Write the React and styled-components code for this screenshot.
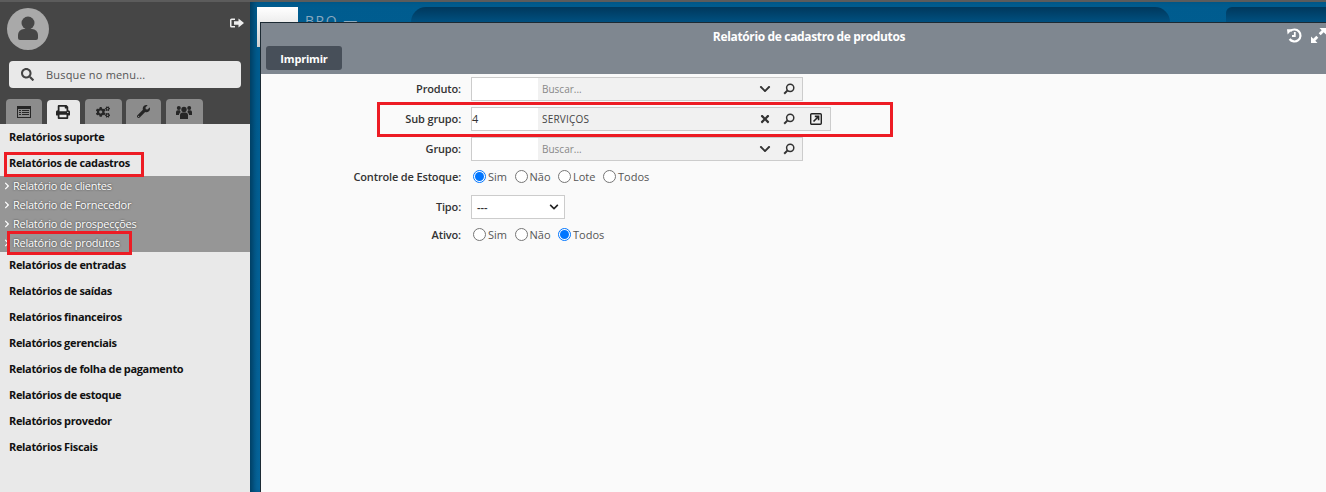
import React from 'react'
import styled, { createGlobalStyle } from 'styled-components'
import { FaSearch, FaPrint, FaCogs, FaWrench, FaChevronDown, FaTimes, FaChevronRight } from 'react-icons/fa'

const Global = createGlobalStyle`
html, body { margin: 0; height: 100%; overflow: hidden; }
#root { height: 100%; }
body { font-family: "Open Sans", "Noto Sans", sans-serif; color: #333; }
`
const Page = styled.div`
display: flex;
height: 492px;
width: 1326px;
position: relative;
overflow: hidden;
`
const Sidebar = styled.aside`
width: 250px;
flex: none;
display: flex;
flex-direction: column;
background: #e9e9e9;
`
const Top = styled.div`
height: 116px;
background: #464646;
border-top: 2px solid #5c5c5c;
display: flex;
flex-direction: column;
padding: 6px 6px 0 7px;
`
const UserRow = styled.div`
display: flex;
justify-content: space-between;
align-items: flex-start;
`
const Avatar = styled.svg`
width: 42px;
height: 42px;
`
const Logout = styled.svg`
width: 14px;
height: 14px;
margin-top: 8px;
`
const SearchBox = styled.div`
margin: 11px 3px 0 2px;
height: 27px;
border-radius: 4px;
background: #e9e9e9;
display: flex;
align-items: center;
padding-left: 12px;
gap: 12px;
color: #555;
font-size: 11px;
letter-spacing: 0.18px;
svg { color: #444; font-size: 13px; }
`
const Tabs = styled.div`
display: flex;
align-items: flex-start;
gap: 4.5px;
margin: 11px 0 0 -1px;
height: 25px;
`
const Tab = styled.div`
width: ${p => p.$w}px;
height: ${p => (p.$active ? 24 : 25)}px;
margin-top: ${p => (p.$active ? 1 : 0)}px;
border-radius: 4px 4px 0 0;
background: ${p => (p.$active ? '#e9e9e9' : '#8c8c8c')};
color: #262626;
display: flex;
align-items: center;
justify-content: center;
font-size: ${p => p.$icon || 14}px;
`
const Menu = styled.nav`
display: flex;
flex-direction: column;
`
const MenuItem = styled.div`
height: 26px;
line-height: 26px;
padding-left: 9px;
font-size: 11px;
font-weight: 700;
letter-spacing: -0.34px;
color: #111;
`
const SubMenu = styled.div`
background: #969696;
height: 76px;
display: flex;
flex-direction: column;
`
const SubItem = styled.div`
height: 19px;
display: flex;
align-items: center;
font-size: 11px;
font-weight: 500;
letter-spacing: -0.25px;
color: #fff;
text-shadow: 0 0 2px #333;
padding-left: 3px;
gap: 2px;
svg { font-size: 8px; flex: none; }
`
const Main = styled.main`
flex: 1;
position: relative;
background: linear-gradient(#005c8f, #06659c);
box-shadow: inset 6px 0 6px -3px #003a5c;
border-top: 2px solid #5c5c5c;
display: flex;
align-items: flex-start;
padding: 5px 0 0 7px;
`
const Logo = styled.div`
width: 41px;
height: 40px;
background: linear-gradient(#fff, #d0d0d0);
flex: none;
`
const Brand = styled.div`
margin: 4px 0 0 7px;
font-size: 14px;
letter-spacing: 1.5px;
color: #8aa9bf;
width: 106px;
flex: none;
`
const Pill = styled.div`
height: 15px;
flex: none;
width: ${p => p.$w}px;
margin-left: ${p => p.$ml}px;
background: linear-gradient(#00385c, #005080);
border-radius: ${p => p.$r};
`
const Win = styled.section`
position: absolute;
left: 10px;
top: 20px;
right: 0;
bottom: 0;
background: #fafafa;
border-top: 1px solid #1c2a33;
border-left: 1px solid #1c2a33;
display: flex;
flex-direction: column;
`
const WinHead = styled.header`
height: 51px;
flex: none;
background: #7f8790;
display: flex;
flex-direction: column;
`
const TitleRow = styled.div`
height: 23px;
display: flex;
align-items: flex-start;
`
const WinTitle = styled.h1`
flex: 1;
margin: 0;
padding-left: 70px;
text-align: center;
font-size: 12px;
font-weight: 700;
letter-spacing: -0.35px;
color: #fff;
line-height: 28px;
`
const WinTools = styled.div`
display: flex;
gap: 9px;
margin-top: 5px;
`
const PrintBtn = styled.button`
margin-left: 5px;
width: 76px;
height: 24px;
border: none;
border-radius: 3px;
background: #474f59;
color: #fff;
font: 700 11px "Open Sans", sans-serif;
letter-spacing: -0.2px;
`
const Form = styled.form`
display: flex;
flex-direction: column;
padding-top: 3px;
`
const Row = styled.div`
display: grid;
grid-template-columns: 200px 1fr;
column-gap: 10px;
align-items: center;
height: ${p => p.$h || 24}px;
margin-bottom: ${p => p.$mb ?? 6}px;
`
const Label = styled.label`
text-align: right;
font-size: 11px;
font-weight: 600;
letter-spacing: -0.15px;
color: #333;
padding-bottom: 2px;
`
const Lookup = styled.div`
display: flex;
width: ${p => p.$w}px;
height: 24px;
box-sizing: border-box;
border: 1px solid #ccc;
background: #f1f1f1;
align-items: center;
`
const Code = styled.div`
width: 66px;
height: 100%;
flex: none;
background: #fff;
font-size: 11px;
line-height: 22px;
color: #333;
`
const Desc = styled.div`
flex: 1;
padding-left: 4px;
font-size: 10px;
letter-spacing: ${p => (p.$filled ? 0.2 : 0)}px;
color: ${p => (p.$filled ? '#444' : '#888')};
`
const Action = styled.span`
width: 24px;
margin-right: ${p => p.$mr || 0}px;
margin-left: ${p => p.$ml || 0}px;
display: flex;
justify-content: center;
align-items: center;
color: #333;
font-size: 12px;
`
const Radios = styled.div`
display: flex;
align-items: center;
gap: 7.5px;
margin-left: 2px;
font-size: 11px;
color: #555;
`
const RadioItem = styled.span`
display: flex;
align-items: center;
gap: 2px;
line-height: 14px;
padding-bottom: 1px;
`
const Dot = styled.span`
width: 13px;
height: 13px;
box-sizing: border-box;
border-radius: 50%;
border: 1px solid ${p => (p.$on ? '#0075ff' : '#767676')};
background: #fff;
display: flex;
align-items: center;
justify-content: center;
&::after {
  content: "";
  width: 9px;
  height: 9px;
  border-radius: 50%;
  background: ${p => (p.$on ? '#0075ff' : 'transparent')};
}
`
const SelectBox = styled.div`
width: 94px;
height: 24px;
box-sizing: border-box;
border: 1px solid #ccc;
background: #fff;
display: flex;
align-items: center;
justify-content: space-between;
padding: 0 5px;
font-size: 11px;
font-weight: 600;
svg { font-size: 10px; color: #222; }
`
const Mark = styled.div`
position: absolute;
left: ${p => p.$x}px;
top: ${p => p.$y}px;
width: ${p => p.$w}px;
height: ${p => p.$h}px;
box-sizing: border-box;
border: 3px solid #ed1c24;
pointer-events: none;
`

const Lens = () => (
  <svg width="12" height="12" viewBox="0 0 12 12" fill="none" stroke="#333" strokeWidth="1.5">
    <circle cx="7.2" cy="4.8" r="3.6" />
    <path d="M4.600 7.400L1.200 10.800" strokeWidth="2" />
  </svg>
)
const OpenIcon = () => (
  <svg width="12" height="12" viewBox="0 0 12 12" fill="none" stroke="#222">
    <rect x="0.7" y="0.7" width="10.6" height="10.6" rx="1" strokeWidth="1.4" />
    <path d="M3.500 8.500L8 4M4.800 3.400H8.600V7.200" strokeWidth="1.6" />
  </svg>
)
const ListIcon = () => (
  <svg width="14" height="12" viewBox="0 0 14 12" fill="#262626">
    <path fillRule="evenodd" d="M0 0h14v12H0zM1 3v8h12V3z" />
    <path d="M2 4h2v1H2zM5 4h7v1H5zM2 6h2v1H2zM5 6h7v1H5zM2 8h2v1H2zM5 8h7v1H5z" />
  </svg>
)
const UsersIcon = () => (
  <svg width="16" height="14" viewBox="0 0 16 14" fill="#262626">
    <circle cx="8" cy="4.500" r="2.700" />
    <circle cx="2.800" cy="3" r="2" />
    <circle cx="13.200" cy="3" r="2" />
    <path d="M4 9.500A2.500 2.500 0 0 1 6 7.500h4a2.500 2.500 0 0 1 2 2V14H4z" />
    <path d="M0 7a1.800 1.800 0 0 1 1.800-1.800h2.100c.2 1 .6 1.500 1 1.900A3.500 3.500 0 0 0 3 9.500V10H0z" />
    <path d="M16 7a1.800 1.800 0 0 0-1.800-1.800h-2.100c-.2 1-.6 1.500-1 1.900a3.500 3.500 0 0 1 1.900 2.400V10H16z" />
  </svg>
)
const HistoryIcon = () => (
  <svg width="15" height="15" viewBox="0 0 15 15" fill="none" stroke="#fff" strokeWidth="2.2">
    <path d="M3.200 3.300A6 6 0 1 1 2.600 11" />
    <path d="M0 1.200L5.400 1.200 0.600 6.500z" fill="#fff" stroke="none" />
    <path d="M7.800 4v4H5" strokeWidth="1.800" />
  </svg>
)
const ExpandIcon = () => (
  <svg width="15" height="15" viewBox="0 0 15 15" fill="#fff">
    <path d="M8.500 0H15v6.500l-2.300-2.300-3 3-2-2 3-3z" />
    <path d="M6.500 15H0V8.500l2.300 2.300 3-3 2 2-3 3z" />
  </svg>
)

const cad = ['Relatório de clientes', 'Relatório de Fornecedor', 'Relatório de prospecções', 'Relatório de produtos']
const rest = ['Relatórios de entradas', 'Relatórios de saídas', 'Relatórios financeiros', 'Relatórios gerenciais', 'Relatórios de folha de pagamento', 'Relatórios de estoque', 'Relatórios provedor', 'Relatórios Fiscais']

const RadioSet = ({ options, on }) => (
  <Radios>
    {options.map(o => (
      <RadioItem key={o}><Dot $on={o === on} />{o}</RadioItem>
    ))}
  </Radios>
)

const App = () => {
  return (
    <Page>
      <Global />
      <Sidebar>
        <Top>
          <UserRow>
            <Avatar viewBox="0 0 42 42">
              <circle cx="21" cy="21" r="21" fill="#a9a9a9" />
              <circle cx="21" cy="15" r="6.500" fill="#464646" />
              <path d="M11 27a6 6 0 0 1 6-6h8a6 6 0 0 1 6 6v3a2 2 0 0 1-2 2H13a2 2 0 0 1-2-2z" fill="#464646" />
            </Avatar>
            <Logout viewBox="0 0 14 14" fill="#eee">
              <path d="M0 4A1.500 1.500 0 0 1 1.500 2.500H5v1.400H1.500v6.200H5v1.400H1.500A1.500 1.500 0 0 1 0 10z" />
              <path d="M4 5.300h4.500V2.500L14 7l-5.500 4.500V8.700H4z" />
            </Logout>
          </UserRow>
          <SearchBox><FaSearch />Busque no menu...</SearchBox>
          <Tabs>
            <Tab $w={36}><ListIcon /></Tab>
            <Tab $w={33.5} $active><FaPrint /></Tab>
            <Tab $w={37}><FaCogs /></Tab>
            <Tab $w={35} $icon={13}><FaWrench /></Tab>
            <Tab $w={37}><UsersIcon /></Tab>
          </Tabs>
        </Top>
        <Menu>
          <MenuItem>Relatórios suporte</MenuItem>
          <MenuItem>Relatórios de cadastros</MenuItem>
          <SubMenu>
            {cad.map(c => <SubItem key={c}><FaChevronRight />{c}</SubItem>)}
          </SubMenu>
          {rest.map(r => <MenuItem key={r}>{r}</MenuItem>)}
        </Menu>
      </Sidebar>
      <Main>
        <Logo />
        <Brand>BRO —</Brand>
        <Pill $w={759} $ml={0} $r="15px 15px 0 0" />
        <Pill $w={100} $ml={56} $r="6px 0 0 0" />
        <Win>
          <WinHead>
            <TitleRow>
              <WinTitle>Relatório de cadastro de produtos</WinTitle>
              <WinTools><HistoryIcon /><ExpandIcon /></WinTools>
            </TitleRow>
            <PrintBtn type="button">Imprimir</PrintBtn>
          </WinHead>
          <Form>
            <Row>
              <Label>Produto:</Label>
              <Lookup $w={332}>
                <Code /><Desc>Buscar...</Desc>
                <Action><FaChevronDown /></Action><Action $mr={1}><Lens /></Action>
              </Lookup>
            </Row>
            <Row>
              <Label>Sub grupo:</Label>
              <Lookup $w={360}>
                <Code>4</Code><Desc $filled>SERVIÇOS</Desc>
                <Action><FaTimes /></Action><Action><Lens /></Action><Action $ml={3} $mr={2}><OpenIcon /></Action>
              </Lookup>
            </Row>
            <Row>
              <Label>Grupo:</Label>
              <Lookup $w={332}>
                <Code /><Desc>Buscar...</Desc>
                <Action><FaChevronDown /></Action><Action $mr={1}><Lens /></Action>
              </Lookup>
            </Row>
            <Row $h={20} $mb={8}>
              <Label>Controle de Estoque:</Label>
              <RadioSet options={['Sim', 'Não', 'Lote', 'Todos']} on="Sim" />
            </Row>
            <Row $mb={6}>
              <Label>Tipo:</Label>
              <SelectBox>---<FaChevronDown /></SelectBox>
            </Row>
            <Row $h={20}>
              <Label>Ativo:</Label>
              <RadioSet options={['Sim', 'Não', 'Todos']} on="Todos" />
            </Row>
          </Form>
        </Win>
      </Main>
      <Mark $x={377} $y={102} $w={516} $h={35} />
      <Mark $x={4} $y={152} $w={140} $h={25} />
      <Mark $x={7} $y={231} $w={125} $h={24} />
    </Page>
  )
}
export default App
